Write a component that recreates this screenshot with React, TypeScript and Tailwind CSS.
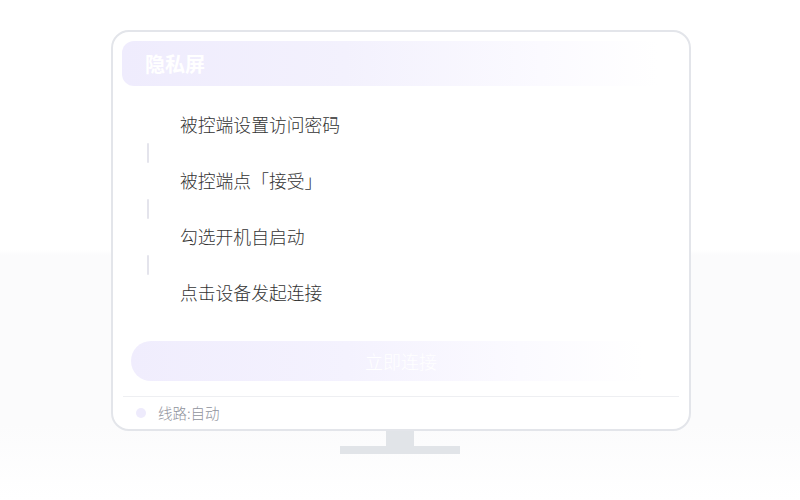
import React from 'react';

const steps = ['被控端设置访问密码', '被控端点「接受」', '勾选开机自启动', '点击设备发起连接'];

const font = "font-['Noto_Sans_CJK_SC','Noto_Sans',sans-serif]";

const App: React.FC = () => {
    return (
        <div className={`w-[800px] h-[500px] overflow-hidden pt-[30px] bg-[linear-gradient(to_bottom,#ffffff_0%,#ffffff_50%,#fbfbfc_51%,#fbfbfc_85%,#ffffff_100%)] ${font}`}>
            {/* Monitor */}
            <div className="ml-[111px] w-[580px] h-[401px] rounded-[18px] border-2 border-[#e3e5ea] bg-white flex flex-col pt-[9px]">
                {/* Title bar */}
                <div className="ml-[9px] mr-[9px] h-[45px] shrink-0 rounded-xl bg-[linear-gradient(to_right,#efecfd_0%,#f3f1fd_40%,#fbfaff_75%,#ffffff_96%)] flex items-center pl-[23px]">
                    <span className="text-[20px] font-bold text-white leading-none">隐私屏</span>
                </div>

                {/* Steps */}
                <div className="mt-[27px] flex flex-col">
                    {steps.map((s, i) => (
                        <div key={s} className="flex flex-col">
                            <div className="pl-[67px] h-[24px] flex items-center text-[17.8px] font-light text-[#333] leading-none">{s}</div>
                            {i < steps.length - 1 && (
                                <div className="ml-[34px] my-[6px] w-[2px] h-[20px] bg-[#e4e4ec] rounded-full" />
                            )}
                        </div>
                    ))}
                </div>

                {/* Connect button */}
                <div className="mt-[36px] mx-[18px] h-[40px] shrink-0 rounded-full bg-[linear-gradient(to_right,#f0edfd_0%,#f4f2fe_40%,#fbfaff_72%,#ffffff_95%)] flex items-center justify-center">
                    <span className="text-[18px] font-light text-white leading-none">立即连接</span>
                </div>

                {/* Footer */}
                <div className="mt-[15px] mx-[10px] border-t border-[#eeeff2]" />
                <div className="flex-1 flex items-center pl-[23px] gap-[12px]">
                    <span className="w-[10px] h-[10px] rounded-full bg-[#eeebfc]" />
                    <span className="text-[14.5px] font-light text-[#8f929c] leading-none">线路:自动</span>
                </div>
            </div>

            {/* Stand */}
            <div className="flex flex-col items-center">
                <div className="w-[28px] h-[15px] bg-[#e1e4e8]" />
                <div className="w-[120px] h-[8px] bg-[#e1e4e8]" />
            </div>
        </div>
    );
};

export default App;
